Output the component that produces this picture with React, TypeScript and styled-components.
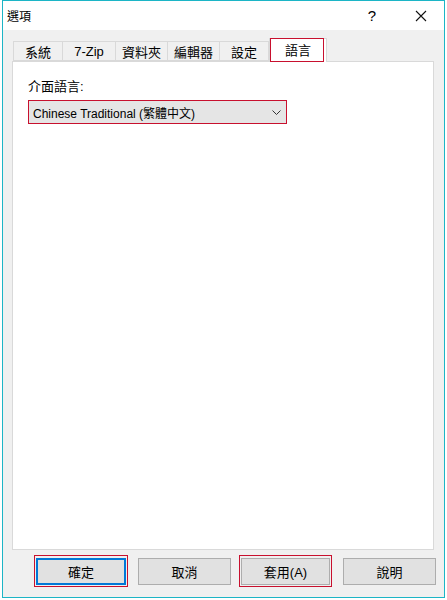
import styled, { createGlobalStyle } from "styled-components"

const GlobalStyle = createGlobalStyle`
  html, body {
    margin: 0;
    padding: 0;
    background: #ffffff;
  }
  body {
    font-family: "Liberation Sans", "Noto Sans CJK TC", sans-serif;
    font-size: 12px;
    color: #000000;
  }
`

const Window = styled.div`
  box-sizing: border-box;
  width: 443px;
  height: 598px;
  margin-left: 2px;
  border: 1px solid #1cb5c6;
  display: flex;
  flex-direction: column;
  background: #f0f0f0;
`

const TitleBar = styled.div`
  height: 29px;
  background: #ffffff;
  display: flex;
  align-items: center;
  padding-left: 4px;
  .title {
    flex: 1;
    font-size: 12px;
  }
  .help {
    width: 46px;
    text-align: center;
    font-size: 15px;
    margin-right: 3px;
  }
  .close {
    width: 46px;
    display: flex;
    justify-content: center;
  }
`

const Body = styled.div`
  flex: 1;
  display: flex;
  flex-direction: column;
  padding: 8px 0 0 9px;
`

const TabRow = styled.div`
  display: flex;
  align-items: flex-end;
  height: 23px;
  padding-left: 1px;
  position: relative;
  z-index: 1;
`

const Tab = styled.div<{ $w: number; $active?: boolean }>`
  box-sizing: border-box;
  width: ${p => p.$w}px;
  height: ${p => (p.$active ? 24 : 20)}px;
  margin-bottom: ${p => (p.$active ? -1 : 0)}px;
  display: flex;
  align-items: center;
  justify-content: center;
  padding-bottom: ${p => (p.$active ? 2 : 0)}px;
  background: ${p => (p.$active ? "#ffffff" : "#f0f0f0")};
  border: 1px solid #d9d9d9;
  border-bottom: ${p => (p.$active ? "none" : "1px solid #d9d9d9")};
  border-left: ${p => (p.$active ? "1px solid #d9d9d9" : "none")};
  font-size: 13px;
  position: relative;
  &:first-child {
    border-left: 1px solid #d9d9d9;
  }
  &.marked::after {
    content: "";
    position: absolute;
    left: 0;
    top: -1px;
    width: 54px;
    height: 24px;
    box-sizing: border-box;
    border: 1px solid #c8102e;
  }
`

const Panel = styled.div`
  box-sizing: border-box;
  width: 422px;
  height: 489px;
  background: #ffffff;
  border: 1px solid #d9d9d9;
  padding: 17px 0 0 15px;
`

const Label = styled.div`
  font-size: 13px;
  line-height: 16px;
  margin-bottom: 5px;
`

const Select = styled.div`
  box-sizing: border-box;
  width: 259px;
  height: 24px;
  background: #e5e5e5;
  border: 1px solid #c8102e;
  display: flex;
  align-items: center;
  padding: 0 5px 0 4px;
  font-size: 12px;
  .value {
    flex: 1;
  }
`

const ButtonRow = styled.div`
  display: flex;
  padding-left: 24px;
  margin-top: 8px;
`

const ButtonWrap = styled.div<{ $marked?: boolean; $ml: number }>`
  box-sizing: border-box;
  padding: 2px 1px 1px 1px;
  border: 1px solid ${p => (p.$marked ? "#c8102e" : "transparent")};
  margin: -3px -2px 0 ${p => p.$ml - 2}px;
`

const Button = styled.div<{ $w: number; $default?: boolean }>`
  box-sizing: border-box;
  width: ${p => p.$w}px;
  height: 27px;
  background: #e1e1e1;
  border: ${p => (p.$default ? "2px solid #0078d7" : "1px solid #adadad")};
  display: flex;
  align-items: center;
  justify-content: center;
  font-size: 13px;
`

const tabs = [
  { label: "系統", w: 50 },
  { label: "7-Zip", w: 53 },
  { label: "資料夾", w: 52 },
  { label: "編輯器", w: 52 },
  { label: "設定", w: 49 },
]

const App = () => {
  return <>
    <GlobalStyle />
    <Window>
      <TitleBar>
        <span className="title">選項</span>
        <span className="help">?</span>
        <span className="close">
          <svg width="12" height="12" viewBox="0 0 12 12">
            <path d="M1 1 L11 11 M11 1 L1 11" stroke="#111" strokeWidth="1.1" fill="none" />
          </svg>
        </span>
      </TitleBar>
      <Body>
        <TabRow>
          {tabs.map(t => <Tab key={t.label} $w={t.w}>{t.label}</Tab>)}
          <Tab $w={58} $active className="marked">語言</Tab>
        </TabRow>
        <Panel>
          <Label>介面語言:</Label>
          <Select>
            <span className="value">Chinese Traditional (繁體中文)</span>
            <svg width="9" height="5" viewBox="0 0 9 5">
              <path d="M0.5 0.5 L4.5 4.5 L8.5 0.5" stroke="#333" strokeWidth="1" fill="none" />
            </svg>
          </Select>
        </Panel>
        <ButtonRow>
          <ButtonWrap $marked $ml={0}><Button $w={90} $default>確定</Button></ButtonWrap>
          <ButtonWrap $ml={12}><Button $w={93}>取消</Button></ButtonWrap>
          <ButtonWrap $marked $ml={10}><Button $w={89}>套用(A)</Button></ButtonWrap>
          <ButtonWrap $ml={13}><Button $w={93}>說明</Button></ButtonWrap>
        </ButtonRow>
      </Body>
    </Window>
  </>
}

export default App
